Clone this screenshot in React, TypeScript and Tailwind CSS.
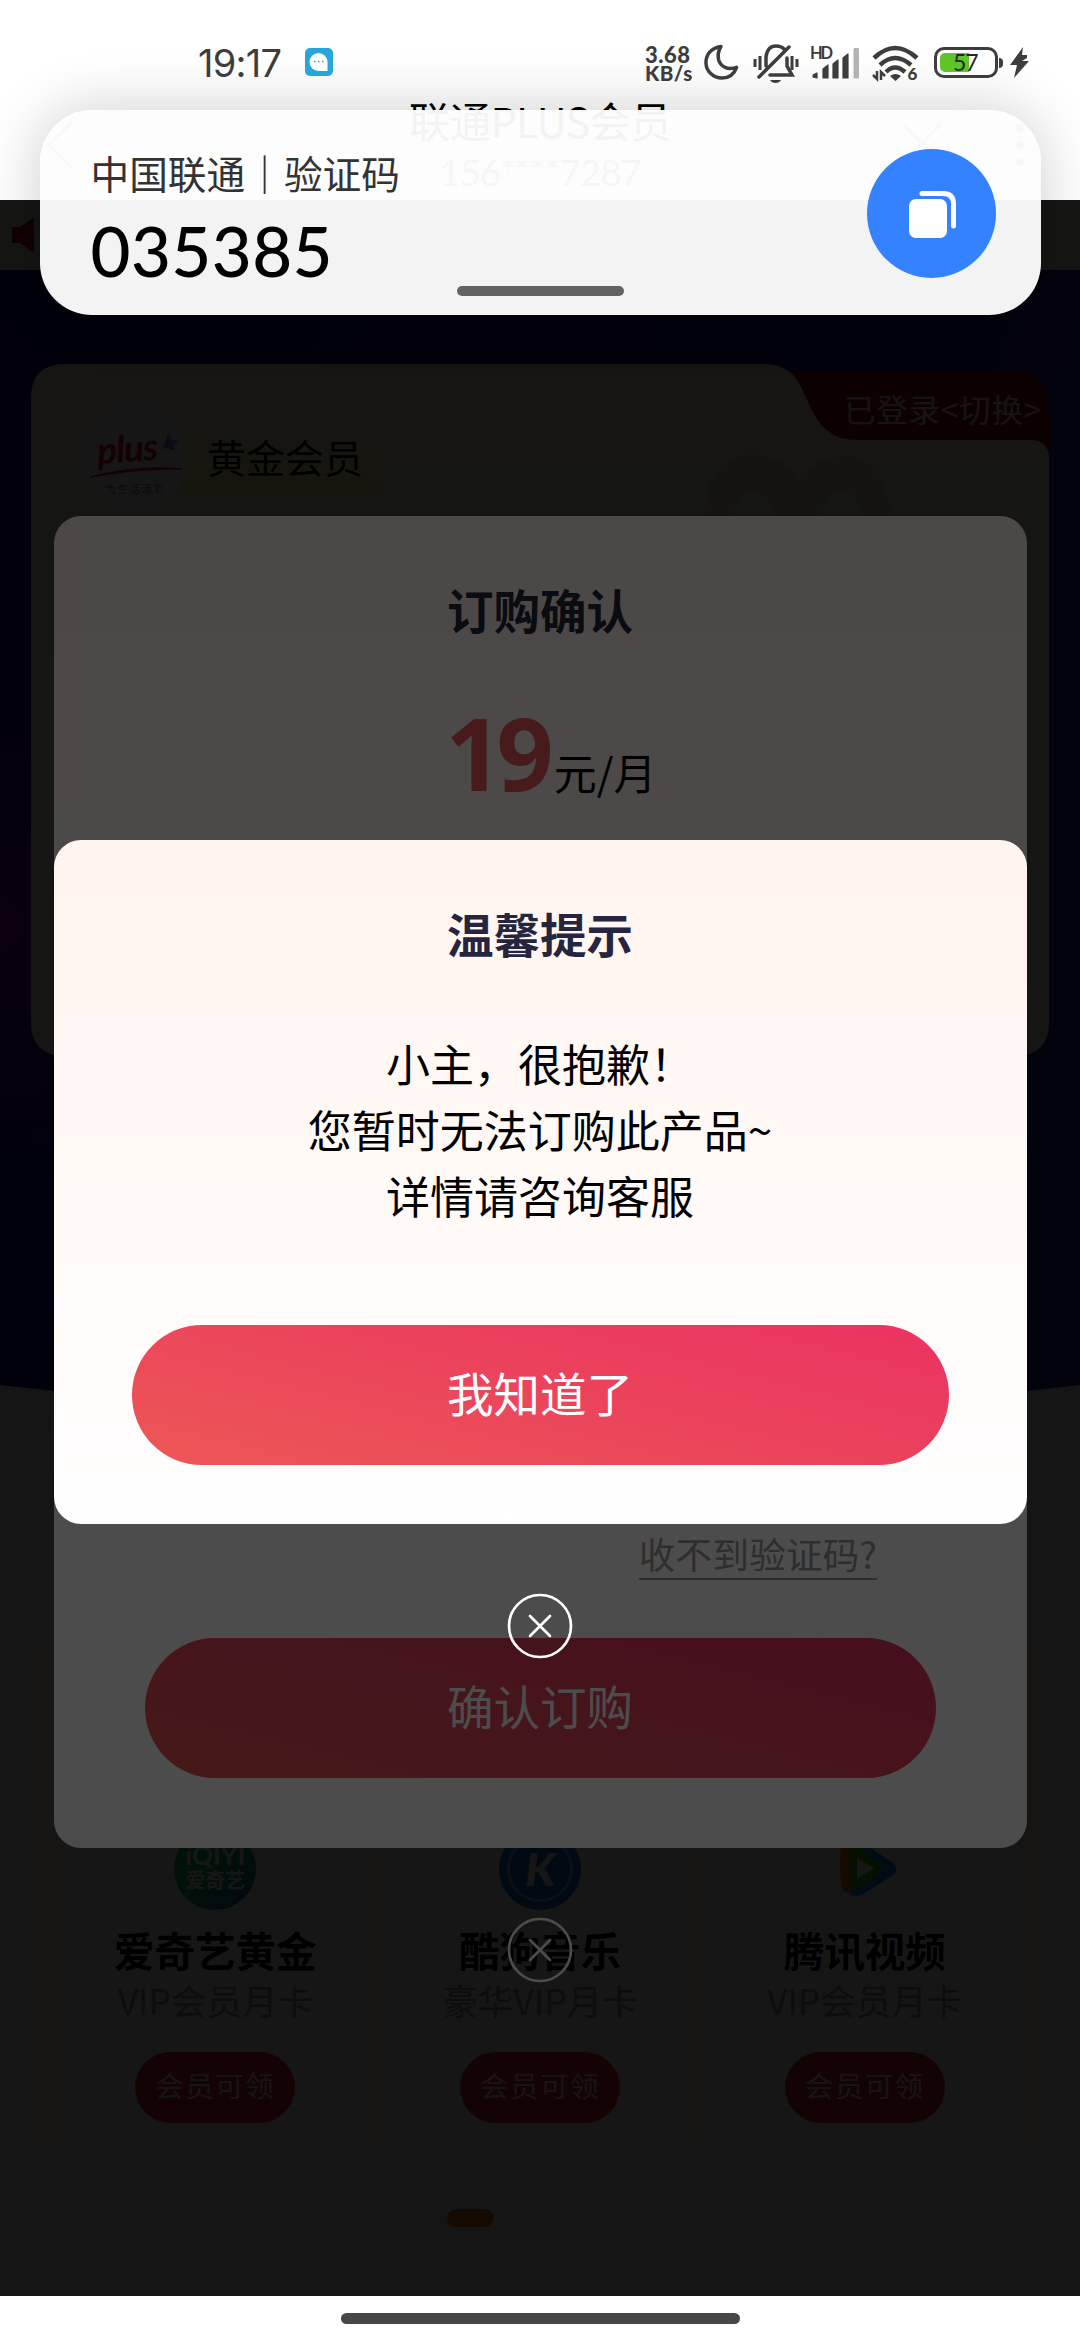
import { type ReactNode } from "react";

const benefits = [
  { name: "爱奇艺黄金", desc: "VIP会员月卡", logo: <IqiyiLogo /> },
  { name: "酷狗音乐", desc: "豪华VIP月卡", logo: <KugouLogo /> },
  { name: "腾讯视频", desc: "VIP会员月卡", logo: <TencentLogo /> }
];

function IqiyiLogo() {
  return (
    <div className="flex h-[82px] w-[82px] flex-col items-center rounded-full bg-[linear-gradient(135deg,#00c853_45%,#2a4fd0)] pt-[14px] font-['Lato','Noto_Sans_CJK_SC',sans-serif] font-bold text-white">
      <span className="text-[26px] leading-[27px]">iQIYI</span>
      <span className="font-['Noto_Sans_CJK_SC',sans-serif] text-[20px] leading-[21px]">爱奇艺</span>
    </div>
  );
}

function KugouLogo() {
  return (
    <div className="flex h-[82px] w-[82px] items-center justify-center rounded-full bg-[#0f6fd6]">
      <div className="flex h-[66px] w-[66px] items-center justify-center rounded-full border-[3px] border-[#7fb8f0] font-['Lato',sans-serif] text-[46px] leading-none font-black text-white italic">
        K
      </div>
    </div>
  );
}

function TencentLogo() {
  return (
    <svg className="h-[82px] w-[82px]" viewBox="0 0 82 82">
      <path d="M25 12q8-2 16 4l28 19q7 6 0 12L41 65q-12 6-16 0z" fill="#0a7cf0" />
      <path d="M17 17q5-5 11-3v50q-8 2-10-4-4-22-1-43z" fill="#ff7a00" />
      <path d="M26 18q6-1 11 3l18 14q6 5 0 11L37 59q-6 4-11 2z" fill="#35b800" />
      <path d="M33 30l17 10.500-17 10z" fill="#fff" />
    </svg>
  );
}

function CloseButton() {
  return (
    <button type="button" aria-label="关闭" className="mt-[69px] h-[66px] w-[66px]">
      <svg viewBox="0 0 66 66" fill="none" stroke="#fff" strokeWidth="2.700" strokeLinecap="round">
        <circle cx="33" cy="33" r="31" />
        <path d="M23 23l20 20M43 23L23 43" />
      </svg>
    </button>
  );
}

function Modal({ children, className }: { children: ReactNode; className: string }) {
  return <div className={`absolute inset-0 flex flex-col items-center bg-black/70 ${className}`}>{children}</div>;
}

function StatusBar() {
  return (
    <div className="flex h-[124px] items-start pt-[40px] font-['Lato',sans-serif] text-[#3d3d3d] *:shrink-0">
      <span className="ml-[198px] w-[87px] font-['Inter',sans-serif] text-[38px] leading-[46px] tracking-[-0.700px]">19:17</span>
      <svg className="mt-[8px] ml-[20px] h-[28px] w-[28px]" viewBox="0 0 28 28">
        <rect width="28" height="28" rx="5" fill="#29a6d8" />
        <path d="M13.500 5a9 9 0 1 0 0 18H22.500v-9a9 9 0 0 0-9-9z" fill="#fff" />
        <path d="M9 13.500h1.500M13 13.500h1.500M17 13.500h1.500" stroke="#29a6d8" strokeWidth="1.700" />
      </svg>
      <div className="mt-[5px] ml-[312px] w-[49px] text-[22px] leading-[19px] font-black">
        <div className="tracking-[0.500px]">3.68</div>
        <div className="text-[20.500px] tracking-[0.500px]">KB/s</div>
      </div>
      <svg className="mt-[4px] ml-[10px] h-[37px] w-[35px]" viewBox="0 0 36 38" fill="none" stroke="#3d3d3d" strokeWidth="3.600" strokeLinejoin="round">
        <path d="M17.500 2.500C7 4 2 11 2 19c0 9 7.500 16 16.500 16 7 0 12.500-4 15-11-9 3-16.500-.500-18.500-8-1.200-5 0-9.500 2.500-13.500z" />
      </svg>
      <svg className="mt-[3px] ml-[14px] h-[42px] w-[46px]" viewBox="0 0 46 42" fill="none" stroke="#3d3d3d" strokeWidth="3.500">
        <path d="M2 16v8M7 13v14M39 13v14M44 16v8" strokeWidth="3" />
        <path d="M13 23V14C14 6 18 3 23 3c4 0 7 1.500 9 4M34 15v8l5 9H17M6 34L36 4" strokeLinecap="round" />
        <path d="M17 37h11c-2 4-9 4-11 0z" fill="#3d3d3d" stroke="none" />
      </svg>
      <svg className="mt-[4px] ml-[10px] h-[38px] w-[52px] overflow-visible" viewBox="0 0 52 38" fill="#3d3d3d">
        <text x="1" y="15" fontSize="16.500" fontWeight="700" textLength="23">HD</text>
        <path d="M4 33v-1q0-2 4-3v5zM14 25l5-4v13h-5zM24 20l5-4v18h-5zM34 14l5-4v24h-5z" stroke="#3d3d3d" strokeWidth="1.200" strokeLinejoin="round" />
        <rect x="44.500" y="4" width="5.500" height="30.500" rx="1" fill="#b3b3b3" />
      </svg>
      <svg className="mt-[4px] ml-[11px] h-[38px] w-[48px] overflow-visible" viewBox="0 0 48 38" fill="none" stroke="#3d3d3d" strokeWidth="4.500">
        <path d="M2 14q21-20 43 0M8 21q15-14 31 0M14 28q9-9 19 0" />
        <path d="M18 32q5.500-4 11 0l-5.500 5z" fill="#3d3d3d" stroke="none" />
        <path d="M5 27v8l-4-4M9 36v-8l4 4" strokeWidth="2.500" />
        <text x="35.500" y="36" fontSize="17" fontWeight="900" fill="#3d3d3d" stroke="none">6</text>
      </svg>
      <div className="mt-[7px] ml-[14px] flex h-[31px] w-[64px] rounded-[10px] border-[3.500px] border-[#3d3d3d] p-[3px]">
        <div className="h-full w-[29px] shrink-0 rounded-l-[5px] bg-[#5ec427]" />
        <span className="-ml-[16px] text-[23px] leading-[18px] tracking-[-1px] text-[#262626]">57</span>
      </div>
      <div className="mt-[18px] ml-[1px] h-[10px] w-[4px] rounded-r bg-[#3d3d3d]" />
      <svg className="mt-[7px] ml-[7px] h-[32px] w-[19px]" viewBox="0 0 19 32" fill="#3d3d3d">
        <path d="M13 0L0 18h7L4 31 19 14h-7l5-3V8h-5z" />
      </svg>
    </div>
  );
}

function PageHeader() {
  return (
    <header className="h-[200px] bg-white">
      <div className="absolute top-[117px] left-[44px]">
        <svg className="h-[56px] w-[32px]" viewBox="0 0 32 56" fill="none" stroke="#777" strokeWidth="3">
          <path d="M28 5L4 28l24 23" />
        </svg>
      </div>
      <div className="absolute top-[96px] left-0 w-full text-center">
        <div className="text-[41.500px] leading-[48px] tracking-[-0.700px] text-black">联通PLUS会员</div>
        <div className="font-['Lato',sans-serif] text-[37px] leading-[56px] tracking-[-1px] text-[#555]">156****7287</div>
      </div>
      <div className="absolute top-[118px] right-[55px] flex gap-[72px]">
        <svg className="h-[50px] w-[42px]" viewBox="0 0 42 50" fill="none" stroke="#777" strokeWidth="3">
          <path d="M2 6l38 38M40 6L2 44" />
        </svg>
        <svg className="h-[50px] w-[10px]" viewBox="0 0 10 50" fill="#777">
          <circle cx="5" cy="10" r="4" />
          <circle cx="5" cy="27" r="4" />
          <circle cx="5" cy="44" r="4" />
        </svg>
      </div>
    </header>
  );
}

function MemberCard() {
  return (
    <section className="relative mx-[31px] mt-[94px] h-[692px]">
      <svg className="absolute inset-0 h-full w-full" viewBox="0 0 1018 692">
        <defs>
          <linearGradient id="card" x1="0" y1="0" x2="0" y2="1">
            <stop offset="0" stopColor="#ffecd2" />
            <stop offset="0.250" stopColor="#f2efe0" />
            <stop offset="1" stopColor="#f0eee0" />
          </linearGradient>
        </defs>
        <path d="M740 8H984Q1018 10 1018 44V110H740z" fill="#8a120a" />
        <path d="M34 0H734Q760 0 771 25C782 48 790 76 826 76H1002Q1018 78 1018 94V658Q1018 692 984 692H34Q0 692 0 658V34Q0 0 34 0z" fill="url(#card)" />
        <path d="M674 155V140Q680 92 721 90Q751 92 768 114Q790 90 820 92Q856 98 860 155H830Q826 128 811 126Q792 130 790 155H744Q740 130 722 128Q704 130 702 155z" fill="#f5dcc4" />
      </svg>
      <div className="relative flex justify-end">
        <span className="pt-[25px] pr-[7px] text-[31.500px] leading-[39px] tracking-[0.800px] text-[#ffe4d8]">已登录&lt;切换&gt;</span>
      </div>
      <div className="relative isolate -mt-[23px] ml-[53px] flex items-center">
        <div className="relative z-10 flex h-[104px] w-[104px] flex-col items-center rounded-full bg-white">
          <svg className="mt-[22px] h-[56px] w-[100px]" viewBox="0 0 100 56" fill="none">
            <text x="12" y="37" fontFamily="Lato" fontStyle="italic" fontWeight="700" fontSize="37" letterSpacing="-1" fill="#e80f2c" transform="rotate(-4 12 37)">plus</text>
            <path d="M4 50Q50 38 96 42Q50 41 4 50z" stroke="#e80f2c" strokeWidth="1.500" />
            <path d="M82 6l4 7 8 1-6 4 1 6-7-3-6 1 3-6z" fill="#8a7be0" />
          </svg>
          <span className="text-[10px] leading-[12px] tracking-[2px] text-[#777]">为生活添彩</span>
        </div>
        <div className="-ml-[14px] h-[74px] w-[207px] bg-linear-to-b from-[#f7f1d4] to-[#ffea8c] pl-[33px] text-[39px] leading-[73px] text-black">
          黄金会员
        </div>
      </div>
    </section>
  );
}

function TicketEdges() {
  return (
    <svg className="mx-auto mt-[100px] block h-[160px] w-[1020px]" viewBox="0 0 1020 160" fill="#2c2c78" fillOpacity="0.550" stroke="#5a5ab0" strokeOpacity="0.600" strokeWidth="2">
      <path d="M16 1H1004Q1018 3 1019 18V68Q1008 70 1008 80T1019 92V142Q1018 157 1004 159H16Q2 157 1 142V92Q12 90 12 80T1 68V18Q2 3 16 1z" />
    </svg>
  );
}

function OrderPage() {
  return (
    <div className="relative flex h-full flex-col bg-[#f0f0f0]">
      <svg className="absolute top-[70px] left-0 h-[1140px] w-full" viewBox="0 0 1080 1140" preserveAspectRatio="none">
        <defs>
          <linearGradient id="hero" x1="0" y1="0" x2="1" y2="0.300">
            <stop offset="0" stopColor="#12087c" />
            <stop offset="1" stopColor="#2424a0" />
          </linearGradient>
          <radialGradient id="glow" cx="0" cy="0.570" r="0.200">
            <stop offset="0" stopColor="#7c00a0" />
            <stop offset="1" stopColor="#7c00a0" stopOpacity="0" />
          </radialGradient>
        </defs>
        <path d="M0 0H1080V1115Q540 1180 0 1115z" fill="url(#hero)" />
        <path d="M0 0H1080V1115Q540 1180 0 1115z" fill="url(#glow)" />
      </svg>
      <div className="flex h-[70px] items-center bg-[#f5eddc] pl-[12px]">
        <svg className="h-[38px] w-[24px]" viewBox="0 0 24 38" fill="#c00f2c">
          <path d="M0 11h8L22 1v36L8 27H0z" />
        </svg>
      </div>
      <MemberCard />
      <TicketEdges />
      <div className="mx-[31px] mt-[324px] flex h-[532px] gap-[20px] bg-[linear-gradient(#faf1e0_490px,#f0f0f0_530px)] px-[32px]">
        {benefits.map((item) => (
          <div key={item.name} className="flex h-[530px] flex-1 flex-col items-center bg-[#f7f7f7] pt-[188px]">
            {item.logo}
            <div className="mt-[14px] text-[40.500px] leading-[52px] font-bold whitespace-nowrap text-black">{item.name}</div>
            <div className="text-[35.500px] leading-[48px] whitespace-nowrap text-[#999]">{item.desc}</div>
            <div className="mt-[28px] h-[71px] w-[160px] rounded-full bg-[#e42c3c] text-center text-[28.500px] leading-[66px] tracking-[1.500px] text-[#ffe9e4]">
              会员可领
            </div>
          </div>
        ))}
      </div>
      <div className="mx-auto mt-[37px] h-[18px] w-[186px] rounded-full bg-[#fafafa]">
        <div className="h-full w-[47px] rounded-full bg-[#e87410]" />
      </div>
    </div>
  );
}

function ConfirmDialog() {
  return (
    <Modal className="pt-[316px]">
      <div className="flex h-[1332px] w-[973px] flex-col items-center rounded-[27px] bg-[linear-gradient(#fff0ec,#fff_60%)]">
        <h2 className="mt-[60px] text-[46.500px] leading-[66px] font-bold text-[#25253f]">订购确认</h2>
        <p className="mt-[60px] flex items-baseline pl-[22px] text-black">
          <span className="font-['Noto_Sans',sans-serif] text-[100px] leading-[100px] font-bold tracking-[-6px] text-[#ee585c]">19</span>
          <span className="relative -top-px ml-[6px] text-[43px] leading-[60px]">元/月</span>
        </p>
        <a className="mt-auto mb-[58px] ml-[436px] border-b-2 border-[#999] text-[36.500px] leading-[48px] tracking-[0.300px] text-[#999]">收不到验证码?</a>
        <button type="button" className="mb-[70px] h-[140px] w-[791px] rounded-full bg-[linear-gradient(14deg,#ec5555_5%,#eb3262)] pb-[6px] text-[46.500px] leading-[134px] text-white">
          确认订购
        </button>
      </div>
      <CloseButton />
    </Modal>
  );
}

function TipDialog() {
  return (
    <Modal className="pt-[640px]">
      <div className="flex h-[684px] w-[973px] flex-col items-center rounded-[27px] bg-[linear-gradient(#fff4ef,#fff)]">
        <h2 className="mt-[60px] text-[46.500px] leading-[66px] font-bold text-[#25253f]">温馨提示</h2>
        <p className="mt-[64px] text-center text-[44px] leading-[66px] text-black">
          小主，很抱歉！
          <br />
          您暂时无法订购此产品~
          <br />
          详情请咨询客服
        </p>
        <button type="button" className="mt-[97px] h-[140px] w-[817px] rounded-full bg-[linear-gradient(14deg,#ec5555_5%,#eb3262)] pb-[6px] text-[46.500px] leading-[134px] text-white">
          我知道了
        </button>
      </div>
      <CloseButton />
    </Modal>
  );
}

function SmsNotification() {
  return (
    <div className="absolute top-[110px] left-[39.500px] flex h-[205px] w-[1001px] justify-between rounded-[52px] bg-[#fdfdfd]/96 pr-[45px] pl-[51px] shadow-[0_0_60px_rgba(0,0,0,0.200)]">
      <div className="pt-[38px]">
        <div className="text-[38.700px] leading-[48px] text-[#333]">
          中国联通<span className="font-bold">｜</span>验证码
        </div>
        <div className="mt-[13px] font-['Lato',sans-serif] text-[69px] leading-[84px] font-medium tracking-[0.400px] text-black">035385</div>
      </div>
      <button type="button" aria-label="复制" className="mt-[39px] h-[129px] w-[129px] rounded-full bg-[#3482ff]">
        <svg viewBox="0 0 129 129">
          <rect x="42" y="50" width="38" height="39" rx="7" fill="#fff" />
          <path d="M55 44.500H76Q86.500 44.500 86.500 55V77" fill="none" stroke="#fff" strokeWidth="5" strokeLinecap="round" />
        </svg>
      </button>
      <div className="absolute bottom-[19px] left-[417px] h-[10px] w-[167px] rounded-full bg-[#626262]" />
    </div>
  );
}

export default function App() {
  return (
    <div className="relative flex h-[2340px] w-[1080px] flex-col overflow-hidden bg-white font-['Noto_Sans_CJK_SC',sans-serif]">
      <PageHeader />
      <main className="relative h-[2096px]">
        <OrderPage />
        <ConfirmDialog />
        <TipDialog />
      </main>
      <footer className="flex h-[44px] items-start justify-center bg-white pt-[17px]">
        <div className="h-[11px] w-[399px] rounded-full bg-[#474747]" />
      </footer>
      <SmsNotification />
      <div className="absolute top-0 left-0 w-full">
        <StatusBar />
      </div>
    </div>
  );
}
